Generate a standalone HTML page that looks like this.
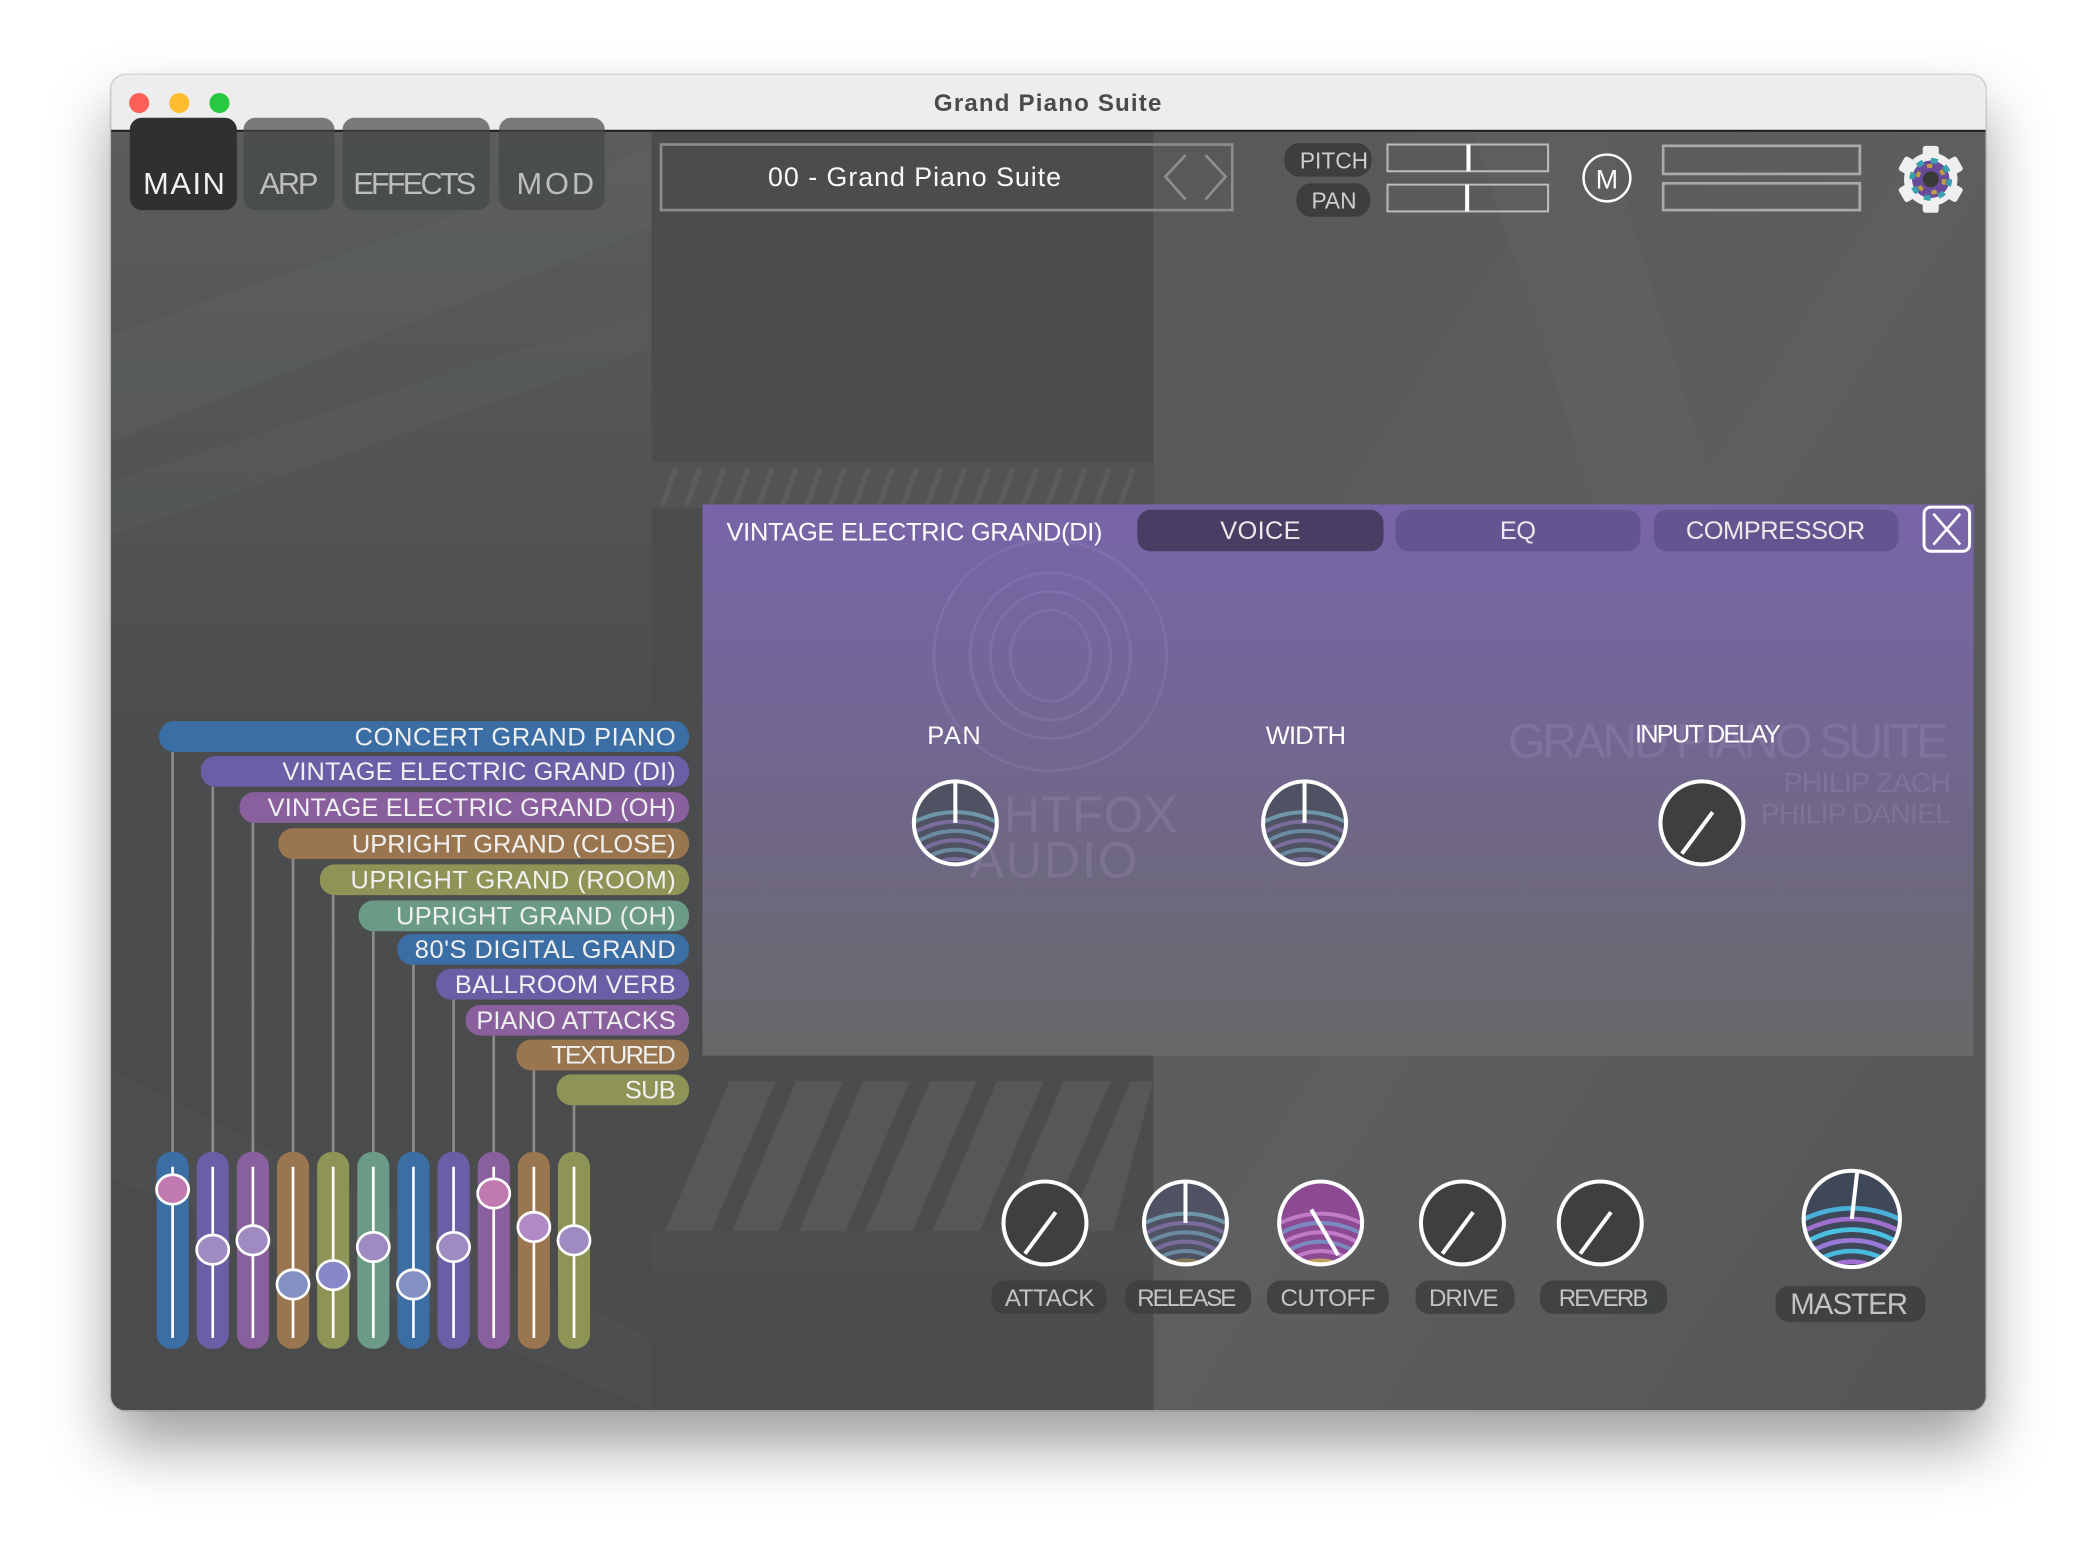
<!DOCTYPE html>
<html><head><meta charset="utf-8">
<style>
html,body{margin:0;padding:0;width:2098px;height:1560px;overflow:hidden;background:#fff;}
#wrap{position:absolute;left:0;top:0;width:1568px;height:1166px;transform:scale(1.33801);transform-origin:0 0;}
#win{position:absolute;left:83px;top:56px;width:1401px;height:998px;border-radius:11px;overflow:hidden;box-shadow:0 26px 46px rgba(0,0,0,0.38),0 0 0 1px rgba(0,0,0,0.15);}
svg text{font-family:"Liberation Sans",sans-serif;}
</style></head><body>
<div id="wrap"><div id="win">
<svg width="1401" height="998" viewBox="83 56 1401 998" xmlns="http://www.w3.org/2000/svg">
<defs>
<linearGradient id="lg" x1="0" y1="0" x2="0" y2="1"><stop offset="0" stop-color="#5a5c5d"/><stop offset="0.5" stop-color="#4b4c4d"/><stop offset="1" stop-color="#4a4b4c"/></linearGradient>
<linearGradient id="rg" x1="0" y1="0" x2="1" y2="1"><stop offset="0" stop-color="#58595a"/><stop offset="0.5" stop-color="#5d5e5f"/><stop offset="1" stop-color="#545556"/></linearGradient>
<linearGradient id="pg" x1="0" y1="0" x2="0" y2="1"><stop offset="0" stop-color="#7865a9"/><stop offset="0.45" stop-color="#726790"/><stop offset="1" stop-color="#686868"/></linearGradient>
<clipPath id="k1"><circle cx="714" cy="615" r="30"/></clipPath>
<clipPath id="k2"><circle cx="975" cy="615" r="30"/></clipPath>
<clipPath id="k3"><circle cx="886" cy="914" r="30"/></clipPath>
<clipPath id="k4"><circle cx="987" cy="914" r="30"/></clipPath>
<clipPath id="k5"><circle cx="1384" cy="911" r="35"/></clipPath>
</defs>
<rect x="83" y="56" width="1401" height="998" fill="#4b4c4d"/>
<rect x="83" y="98" width="404" height="956" fill="url(#lg)"/>
<polygon points="83,250 487,110 487,170 83,330" fill="#626465" opacity="0.35"/>
<polygon points="83,360 487,230 487,260 83,400" fill="#5e6061" opacity="0.3"/>
<polygon points="83,800 487,1000 487,1054 83,880" fill="#545657" opacity="0.35"/>
<rect x="487" y="98" width="375" height="956" fill="#4b4c4d"/>
<rect x="487" y="345" width="375" height="35" fill="#525354"/>
<g stroke="#616263" stroke-width="4" opacity="0.6">
<path d="M495,378 L505,350 M513,378 L523,350 M531,378 L541,350 M549,378 L559,350 M567,378 L577,350 M585,378 L595,350 M603,378 L613,350 M621,378 L631,350 M639,378 L649,350 M657,378 L667,350 M675,378 L685,350 M693,378 L703,350 M711,378 L721,350 M729,378 L739,350 M747,378 L757,350 M765,378 L775,350 M783,378 L793,350 M801,378 L811,350 M819,378 L829,350 M837,378 L847,350"/>
</g>
<rect x="862" y="98" width="622" height="956" fill="url(#rg)"/>
<polygon points="1100,98 1200,98 1380,700 1300,700" fill="#626364" opacity="0.35"/>
<g fill="#555758">
<polygon points="497,920 545,808 580,808 532,920"/>
<polygon points="547,920 595,808 630,808 582,920"/>
<polygon points="597,920 645,808 680,808 632,920"/>
<polygon points="647,920 695,808 730,808 682,920"/>
<polygon points="697,920 745,808 780,808 732,920"/>
<polygon points="747,920 795,808 830,808 782,920"/>
<polygon points="797,920 845,808 862,808 832,920"/>
</g>
<rect x="487" y="920" width="375" height="30" fill="#4e4f50"/>
<!-- title bar -->
<rect x="83" y="56" width="1401" height="42" fill="#ededed"/>
<rect x="83" y="97" width="1401" height="1.5" fill="#1e1e1e"/>
<circle cx="104" cy="77" r="7.5" fill="#fe5f57"/>
<circle cx="134" cy="77" r="7.5" fill="#febc2e"/>
<circle cx="164" cy="77" r="7.5" fill="#28c840"/>
<text x="783" y="83" text-anchor="middle" font-size="18" font-weight="bold" fill="#4a4a4a" textLength="170">Grand Piano Suite</text>
<!-- tabs -->
<rect x="97" y="88" width="80" height="69" rx="9" fill="#2e3031"/>
<rect x="182" y="88" width="68" height="69" rx="9" fill="#454748" opacity="0.7"/>
<rect x="256" y="88" width="110" height="69" rx="9" fill="#454748" opacity="0.7"/>
<rect x="373" y="88" width="79" height="69" rx="9" fill="#454748" opacity="0.7"/>
<g font-size="23">
<text x="107" y="145" fill="#f2f2f2" textLength="61">MAIN</text>
<text x="194" y="145" fill="#bdbdbd" textLength="44">ARP</text>
<text x="264" y="145" fill="#bdbdbd" textLength="92">EFFECTS</text>
<text x="386" y="145" fill="#bdbdbd" textLength="58">MOD</text>
</g>
<!-- preset -->
<rect x="494" y="108" width="427" height="49" fill="none" stroke="#8b8c8d" stroke-width="2"/>
<text x="574" y="139" font-size="20" fill="#fafafa" textLength="219">00 - Grand Piano Suite</text>
<path d="M886,116 L871,132 L886,149 M901,116 L916,132 L901,149" fill="none" stroke="#8d8e8f" stroke-width="2"/>
<!-- pitch pan -->
<rect x="960" y="107" width="65" height="25" rx="11" fill="#3c3e3f"/>
<rect x="969" y="137" width="55" height="25" rx="11" fill="#3c3e3f"/>
<text x="997" y="126" text-anchor="middle" font-size="17" fill="#cfcfcf">PITCH</text>
<text x="997" y="156" text-anchor="middle" font-size="17" fill="#cfcfcf">PAN</text>
<rect x="1037" y="108" width="120" height="20" fill="none" stroke="#bcbcbc" stroke-width="1.5"/>
<rect x="1037" y="138" width="120" height="20" fill="none" stroke="#bcbcbc" stroke-width="1.5"/>
<rect x="1096" y="108" width="3" height="20" fill="#fff"/>
<rect x="1095" y="138" width="3" height="20" fill="#fff"/>
<circle cx="1201" cy="133" r="17.5" fill="none" stroke="#fff" stroke-width="1.8"/>
<text x="1201" y="141" text-anchor="middle" font-size="20" fill="#fff">M</text>
<rect x="1243" y="109" width="147" height="21" fill="none" stroke="#aaa" stroke-width="2"/>
<rect x="1243" y="137" width="147" height="20" fill="none" stroke="#aaa" stroke-width="2"/>
<!-- gear -->
<g transform="translate(1443,134)">
<circle r="20" fill="#efefef"/>
<g fill="#efefef">
<rect x="-6" y="-25" width="12" height="10" rx="2"/>
<rect x="-6" y="-25" width="12" height="10" rx="2" transform="rotate(60)"/>
<rect x="-6" y="-25" width="12" height="10" rx="2" transform="rotate(120)"/>
<rect x="-6" y="-25" width="12" height="10" rx="2" transform="rotate(180)"/>
<rect x="-6" y="-25" width="12" height="10" rx="2" transform="rotate(240)"/>
<rect x="-6" y="-25" width="12" height="10" rx="2" transform="rotate(300)"/>
</g>
<circle r="14" fill="#6a4a9a"/>
<circle r="14" fill="none" stroke="#3aa0b0" stroke-width="4" stroke-dasharray="5 6"/>
<circle r="10" fill="none" stroke="#c0a040" stroke-width="3" stroke-dasharray="4 7"/>
<circle r="6" fill="#3a3a3a"/>
</g>
<!-- purple panel -->
<rect x="525" y="377" width="950" height="412" fill="url(#pg)"/>
<g opacity="0.12" fill="none" stroke="#c8b0f0" stroke-width="2">
<ellipse cx="785" cy="490" rx="87" ry="86"/>
<ellipse cx="785" cy="490" rx="60" ry="62"/>
<ellipse cx="785" cy="490" rx="45" ry="48"/>
<ellipse cx="785" cy="490" rx="30" ry="34"/>
</g>
<g opacity="0.12" fill="#d8c8f8" font-size="38">
<text x="750" y="622" textLength="130">HTFOX</text>
<text x="725" y="656" textLength="125">AUDIO</text>
<text x="1127" y="566" font-size="36" textLength="329">GRAND PIANO SUITE</text>
<text x="1333" y="592" font-size="21" textLength="125">PHILIP ZACH</text>
<text x="1316" y="615" font-size="21" textLength="142">PHILIP DANIEL</text>
</g>
<text x="543" y="404" font-size="19" fill="#fff" textLength="281">VINTAGE ELECTRIC GRAND(DI)</text>
<rect x="850" y="381" width="184" height="31" rx="10" fill="#493d63"/>
<rect x="1043" y="381" width="183" height="31" rx="10" fill="#645590"/>
<rect x="1236" y="381" width="183" height="31" rx="10" fill="#645590"/>
<g font-size="19" fill="#eaeaea">
<text x="912" y="403" textLength="60">VOICE</text>
<text x="1121" y="403" textLength="27">EQ</text>
<text x="1260" y="403" textLength="134">COMPRESSOR</text>
</g>
<rect x="1438" y="379" width="34" height="33" rx="5" fill="none" stroke="#fff" stroke-width="2.2"/>
<path d="M1445,384 L1465,407 M1465,384 L1445,407" stroke="#fff" stroke-width="2"/>
<g font-size="19" fill="#fff">
<text x="693" y="556" textLength="40">PAN</text>
<text x="946" y="556" textLength="60">WIDTH</text>
<text x="1222" y="555" textLength="109">INPUT DELAY</text>
</g>
<!-- panel knobs -->
<g clip-path="url(#k1)"><circle cx="714" cy="615" r="31" fill="#4e5262"/>
<g fill="none" stroke-width="3"><circle cx="714" cy="675" r="40" stroke="#6a8aa2"/><circle cx="714" cy="675" r="47" stroke="#7a6c9c"/><circle cx="714" cy="675" r="54" stroke="#6a8aa2"/><circle cx="714" cy="675" r="61" stroke="#7a6c9c"/><circle cx="714" cy="675" r="68" stroke="#6f96a6"/><circle cx="714" cy="675" r="33" stroke="#7a6c9c"/></g></g>
<circle cx="714" cy="615" r="31" fill="none" stroke="#fff" stroke-width="3"/>
<line x1="714" y1="615" x2="714" y2="585" stroke="#fff" stroke-width="3"/>
<g clip-path="url(#k2)"><circle cx="975" cy="615" r="31" fill="#4e5262"/>
<g fill="none" stroke-width="3"><circle cx="975" cy="675" r="40" stroke="#6a8aa2"/><circle cx="975" cy="675" r="47" stroke="#7a6c9c"/><circle cx="975" cy="675" r="54" stroke="#6a8aa2"/><circle cx="975" cy="675" r="61" stroke="#7a6c9c"/><circle cx="975" cy="675" r="68" stroke="#6f96a6"/><circle cx="975" cy="675" r="33" stroke="#7a6c9c"/></g></g>
<circle cx="975" cy="615" r="31" fill="none" stroke="#fff" stroke-width="3"/>
<line x1="975" y1="615" x2="975" y2="585" stroke="#fff" stroke-width="3"/>
<circle cx="1272" cy="615" r="31" fill="#3f3f3f" stroke="#fff" stroke-width="3"/>
<line x1="1280" y1="607" x2="1257" y2="638" stroke="#fff" stroke-width="3"/>
<!-- layer labels -->
<g font-size="19" fill="#f0f0f0">
<rect x="119" y="539" width="396" height="23" rx="11" fill="#3b6ea4"/><text x="265" y="557" textLength="240">CONCERT GRAND PIANO</text>
<rect x="150" y="565" width="365" height="23" rx="11" fill="#6a5ea6"/><text x="211" y="583" textLength="294">VINTAGE ELECTRIC GRAND (DI)</text>
<rect x="179" y="592" width="336" height="23" rx="11" fill="#895f9e"/><text x="200" y="610" textLength="305">VINTAGE ELECTRIC GRAND (OH)</text>
<rect x="208" y="619" width="307" height="23" rx="11" fill="#9a7650"/><text x="263" y="637" textLength="242">UPRIGHT GRAND (CLOSE)</text>
<rect x="239" y="646" width="276" height="23" rx="11" fill="#8e9456"/><text x="262" y="664" textLength="243">UPRIGHT GRAND (ROOM)</text>
<rect x="268" y="673" width="247" height="23" rx="11" fill="#6b9b86"/><text x="296" y="691" textLength="209">UPRIGHT GRAND (OH)</text>
<rect x="297" y="698" width="218" height="23" rx="11" fill="#3b6ea4"/><text x="310" y="716" textLength="195">80'S DIGITAL GRAND</text>
<rect x="326" y="724" width="189" height="23" rx="11" fill="#6a5ea6"/><text x="340" y="742" textLength="165">BALLROOM VERB</text>
<rect x="348" y="751" width="167" height="23" rx="11" fill="#895f9e"/><text x="356" y="769" textLength="149">PIANO ATTACKS</text>
<rect x="386" y="777" width="129" height="23" rx="11" fill="#9a7650"/><text x="412" y="795" textLength="93">TEXTURED</text>
<rect x="416" y="803" width="99" height="23" rx="11" fill="#8e9456"/><text x="467" y="821" textLength="38">SUB</text>
</g>
<g stroke="#9a9b9c" stroke-width="2" opacity="0.8">
<line x1="129" y1="562" x2="129" y2="862"/><line x1="159" y1="588" x2="159" y2="862"/><line x1="189" y1="615" x2="189" y2="862"/><line x1="219" y1="642" x2="219" y2="862"/><line x1="249" y1="669" x2="249" y2="862"/><line x1="279" y1="696" x2="279" y2="862"/><line x1="309" y1="721" x2="309" y2="862"/><line x1="339" y1="747" x2="339" y2="862"/><line x1="369" y1="774" x2="369" y2="862"/><line x1="399" y1="800" x2="399" y2="862"/><line x1="429" y1="826" x2="429" y2="862"/>
</g>
<g>
<rect x="117" y="861" width="24" height="147" rx="11" fill="#3b6ea4"/>
<rect x="147" y="861" width="24" height="147" rx="11" fill="#6a5ea6"/>
<rect x="177" y="861" width="24" height="147" rx="11" fill="#895f9e"/>
<rect x="207" y="861" width="24" height="147" rx="11" fill="#9a7650"/>
<rect x="237" y="861" width="24" height="147" rx="11" fill="#8e9456"/>
<rect x="267" y="861" width="24" height="147" rx="11" fill="#6b9b86"/>
<rect x="297" y="861" width="24" height="147" rx="11" fill="#3b6ea4"/>
<rect x="327" y="861" width="24" height="147" rx="11" fill="#6a5ea6"/>
<rect x="357" y="861" width="24" height="147" rx="11" fill="#895f9e"/>
<rect x="387" y="861" width="24" height="147" rx="11" fill="#9a7650"/>
<rect x="417" y="861" width="24" height="147" rx="11" fill="#8e9456"/>
</g>
<g stroke="#fff" stroke-width="2">
<line x1="129" y1="872" x2="129" y2="1000"/><line x1="159" y1="872" x2="159" y2="1000"/><line x1="189" y1="872" x2="189" y2="1000"/><line x1="219" y1="872" x2="219" y2="1000"/><line x1="249" y1="872" x2="249" y2="1000"/><line x1="279" y1="872" x2="279" y2="1000"/><line x1="309" y1="872" x2="309" y2="1000"/><line x1="339" y1="872" x2="339" y2="1000"/><line x1="369" y1="872" x2="369" y2="1000"/><line x1="399" y1="872" x2="399" y2="1000"/><line x1="429" y1="872" x2="429" y2="1000"/>
</g>
<g stroke="#fff" stroke-width="2">
<ellipse cx="129" cy="889" rx="12" ry="11" fill="#c07ab0"/>
<ellipse cx="159" cy="934" rx="12" ry="11" fill="#a08ac2"/>
<ellipse cx="189" cy="927" rx="12" ry="11" fill="#a08ac2"/>
<ellipse cx="219" cy="960" rx="12" ry="11" fill="#8290c2"/>
<ellipse cx="249" cy="953" rx="12" ry="11" fill="#8888c8"/>
<ellipse cx="279" cy="932" rx="12" ry="11" fill="#a08ac2"/>
<ellipse cx="309" cy="960" rx="12" ry="11" fill="#8290c2"/>
<ellipse cx="339" cy="932" rx="12" ry="11" fill="#a08ac2"/>
<ellipse cx="369" cy="892" rx="12" ry="11" fill="#c07ab0"/>
<ellipse cx="399" cy="917" rx="12" ry="11" fill="#b08ac2"/>
<ellipse cx="429" cy="927" rx="12" ry="11" fill="#a08ac2"/>
</g>
<!-- bottom knobs -->
<circle cx="781" cy="914" r="31" fill="#3f3f3f" stroke="#fff" stroke-width="3"/>
<line x1="789" y1="906" x2="766" y2="937" stroke="#fff" stroke-width="3"/>
<g clip-path="url(#k3)"><circle cx="886" cy="914" r="31" fill="#4e5262"/>
<g fill="none" stroke-width="3"><circle cx="886" cy="975" r="40" stroke="#6a8aa2"/><circle cx="886" cy="975" r="47" stroke="#7a6c9c"/><circle cx="886" cy="975" r="54" stroke="#6a8aa2"/><circle cx="886" cy="975" r="61" stroke="#7a6c9c"/><circle cx="886" cy="975" r="68" stroke="#6f96a6"/><circle cx="886" cy="975" r="33" stroke="#8a7a5c"/></g></g>
<circle cx="886" cy="914" r="31" fill="none" stroke="#fff" stroke-width="3"/>
<line x1="886" y1="914" x2="886" y2="884" stroke="#fff" stroke-width="3"/>
<g clip-path="url(#k4)"><circle cx="987" cy="914" r="31" fill="#8c4a92"/>
<g fill="none" stroke-width="3"><circle cx="987" cy="975" r="40" stroke="#c07ac8"/><circle cx="987" cy="975" r="47" stroke="#7a8ac0"/><circle cx="987" cy="975" r="54" stroke="#c07ac8"/><circle cx="987" cy="975" r="61" stroke="#7a8ac0"/><circle cx="987" cy="975" r="68" stroke="#c07ac8"/><circle cx="987" cy="975" r="33" stroke="#c0a060"/></g></g>
<circle cx="987" cy="914" r="31" fill="none" stroke="#fff" stroke-width="3"/>
<line x1="980" y1="904" x2="1000" y2="938" stroke="#fff" stroke-width="3"/>
<circle cx="1093" cy="914" r="31" fill="#3f3f3f" stroke="#fff" stroke-width="3"/>
<line x1="1101" y1="906" x2="1078" y2="937" stroke="#fff" stroke-width="3"/>
<circle cx="1196" cy="914" r="31" fill="#3f3f3f" stroke="#fff" stroke-width="3"/>
<line x1="1204" y1="906" x2="1181" y2="937" stroke="#fff" stroke-width="3"/>
<g clip-path="url(#k5)"><circle cx="1384" cy="911" r="36" fill="#3e4858"/>
<g fill="none" stroke-width="3.5"><circle cx="1384" cy="985" r="42" stroke="#a070d0"/><circle cx="1384" cy="985" r="50" stroke="#4ab8d8"/><circle cx="1384" cy="985" r="58" stroke="#9a7ad8"/><circle cx="1384" cy="985" r="66" stroke="#4ac0e0"/><circle cx="1384" cy="985" r="74" stroke="#a070d0"/><circle cx="1384" cy="985" r="82" stroke="#4ab0d8"/><circle cx="1384" cy="985" r="34" stroke="#70c080"/></g></g>
<circle cx="1384" cy="911" r="36" fill="none" stroke="#fff" stroke-width="3"/>
<line x1="1384" y1="911" x2="1388" y2="876" stroke="#fff" stroke-width="3"/>
<g fill="#3d3f40" opacity="0.9">
<rect x="741" y="957" width="86" height="25" rx="10"/>
<rect x="841" y="957" width="94" height="25" rx="10"/>
<rect x="947" y="957" width="91" height="25" rx="10"/>
<rect x="1058" y="957" width="74" height="25" rx="10"/>
<rect x="1151" y="957" width="95" height="25" rx="10"/>
<rect x="1327" y="961" width="112" height="27" rx="10"/>
</g>
<g font-size="18" fill="#c4c4c4">
<text x="751" y="976" textLength="67">ATTACK</text>
<text x="850" y="976" textLength="74">RELEASE</text>
<text x="957" y="976" textLength="71">CUTOFF</text>
<text x="1068" y="976" textLength="52">DRIVE</text>
<text x="1165" y="976" textLength="67">REVERB</text>
<text x="1338" y="982" font-size="22" textLength="88">MASTER</text>
</g>
</svg>
</div></div>
</body></html>
